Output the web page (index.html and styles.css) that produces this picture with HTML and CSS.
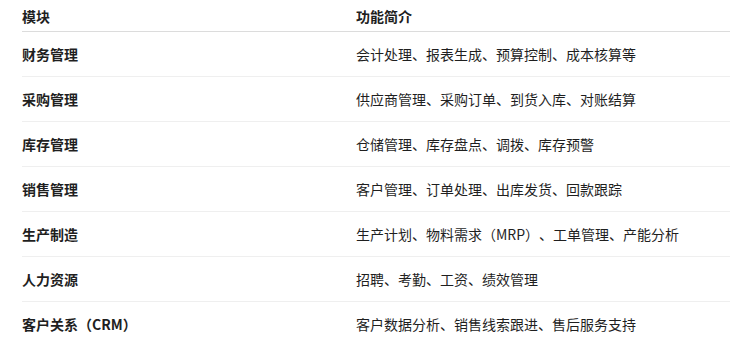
FILE: index.html
```html
<!DOCTYPE html>
<html lang="zh-CN">
<head>
<meta charset="utf-8">
<link rel="stylesheet" href="styles.css">
</head>
<body>
<table class="modules">
  <thead>
    <tr><th class="col-name">模块</th><th class="col-desc">功能简介</th></tr>
  </thead>
  <tbody>
    <tr><td class="col-name">财务管理</td><td class="col-desc">会计处理、报表生成、预算控制、成本核算等</td></tr>
    <tr><td class="col-name">采购管理</td><td class="col-desc">供应商管理、采购订单、到货入库、对账结算</td></tr>
    <tr><td class="col-name">库存管理</td><td class="col-desc">仓储管理、库存盘点、调拨、库存预警</td></tr>
    <tr><td class="col-name">销售管理</td><td class="col-desc">客户管理、订单处理、出库发货、回款跟踪</td></tr>
    <tr><td class="col-name">生产制造</td><td class="col-desc">生产计划、物料需求（MRP）、工单管理、产能分析</td></tr>
    <tr><td class="col-name">人力资源</td><td class="col-desc">招聘、考勤、工资、绩效管理</td></tr>
    <tr><td class="col-name">客户关系（CRM）</td><td class="col-desc">客户数据分析、销售线索跟进、售后服务支持</td></tr>
  </tbody>
</table>
</body>
</html>
```
FILE: styles.css
```css
html, body {
  margin: 0;
  padding: 0;
  background: #ffffff;
}
body {
  padding-left: 22px;
  font-family: "Noto Sans CJK SC", "Noto Sans", sans-serif;
  font-size: 14px;
  color: #1f1f1f;
  overflow: hidden;
  text-spacing-trim: space-all;
}
.modules {
  border-collapse: collapse;
  width: 708px;
}
.modules th,
.modules td {
  padding: 0;
  text-align: left;
  vertical-align: middle;
  line-height: 20px;
}
.modules th {
  height: 31px;
  font-weight: 700;
  border-bottom: 1px solid #dcdcdc;
}
.modules td {
  height: 44px;
  border-bottom: 1px solid #efefef;
}
.modules td.col-name {
  font-weight: 700;
}
.modules tbody tr:last-child td {
  border-bottom: none;
}
.col-name {
  width: 334px;
}
```
